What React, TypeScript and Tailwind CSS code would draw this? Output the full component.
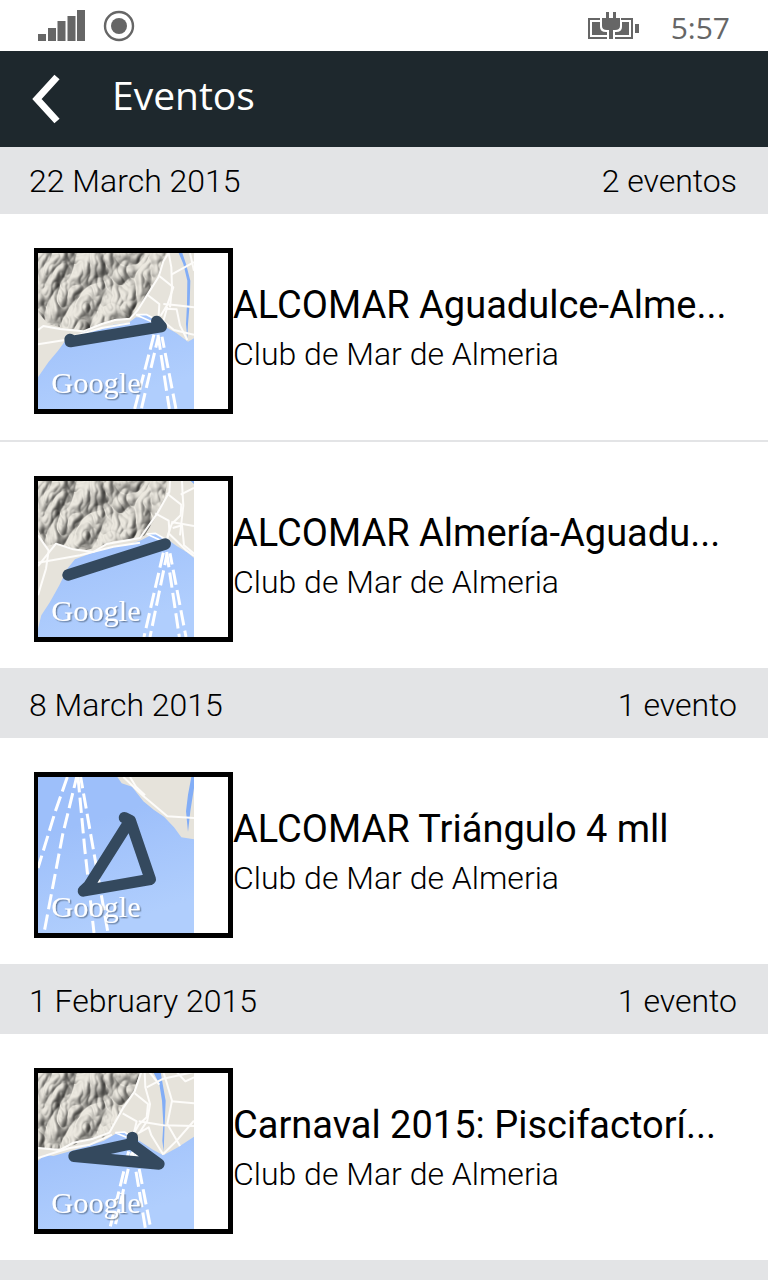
import type { ReactNode } from 'react';

type Point = [number, number];

interface MapArt {
  land: string;
  hills?: string;
  river?: string;
  roads: string[];
  ferries: Point[][];
  route: string;
  harbour?: string;
}

interface EventItem {
  title: string;
  club: string;
  map: string;
}

interface EventGroup {
  date: string;
  count: string;
  events: EventItem[];
}

const groups: EventGroup[] = [
  {
    date: '22 March 2015',
    count: '2 eventos',
    events: [
      { title: 'ALCOMAR Aguadulce-Alme...', club: 'Club de Mar de Almeria', map: 'aguadulce' },
      { title: 'ALCOMAR Almería-Aguadu...', club: 'Club de Mar de Almeria', map: 'almeria' },
    ],
  },
  {
    date: '8 March 2015',
    count: '1 evento',
    events: [{ title: 'ALCOMAR Triángulo 4 mll', club: 'Club de Mar de Almeria', map: 'triangulo' }],
  },
  {
    date: '1 February 2015',
    count: '1 evento',
    events: [{ title: 'Carnaval 2015: Piscifactorí...', club: 'Club de Mar de Almeria', map: 'carnaval' }],
  },
];

// All map shapes are drawn on a 492 x 495 canvas, the viewBox trims the margin
const maps: Record<string, MapArt> = {
  aguadulce: {
    land: 'M24 27H492V283L474 293L440 268L400 245L350 222L318 220L296 236L250 242L215 256L170 262L130 276L105 292L84 320L55 355L24 400Z',
    hills: 'M24 27H408L388 90L352 152L322 200L300 222L250 228L215 240L165 262L100 252L55 240L24 205Z',
    river: 'M446 27H457L468 60L481 110L479 180L474 240L472 284L468 240L471 180L472 110L460 60Z',
    roads: [
      'M24 258L40 246L90 255L160 262L215 240L255 228L300 224L322 200L352 152L386 98L400 52L416 27',
      'M24 301L105 288L135 275L215 252L300 238',
      'M352 152L388 180L386 215',
      'M388 96L430 130L412 182L392 215',
      'M416 27L424 70L426 130L420 190',
      'M400 180L440 184L492 190',
      'M424 92L492 54',
      'M404 194L440 196L450 244L472 288',
      'M412 188L400 232L432 258L492 272',
      'M480 27L492 80',
    ],
    ferries: [
      [[372, 272], [314, 495]],
      [[385, 278], [334, 495]],
      [[384, 272], [418, 495]],
      [[396, 278], [438, 495]],
    ],
    harbour: 'M318 212L350 212L380 228L372 236Z',
    route: 'M120 286L121 293L394 248L380 232',
  },
  almeria: {
    land: 'M24 27H492V258L470 240L440 222L410 200L370 186L330 206L290 220L240 226L200 238L135 262L112 290L88 340L60 390L34 430L24 470Z',
    hills: 'M24 27H412L402 90L372 145L344 190L320 200L250 206L220 220L170 234L120 228L75 215L45 222L24 170Z',
    river: 'M482 27H492V36Z',
    roads: [
      'M24 190L56 236L48 290L24 370',
      'M24 282L78 215L130 232L190 240L230 216L330 198L382 124L418 60L420 27',
      'M24 272L150 250L250 224L330 212',
      'M376 124L416 146L418 176L412 200',
      'M410 64L454 98L452 130L425 156L412 195',
      'M456 27L458 70L460 100L450 190',
      'M424 150L492 162',
      'M428 168L456 160L462 220L492 245',
      'M452 68L492 48',
      'M418 186L470 236L492 252',
    ],
    ferries: [
      [[400, 242], [342, 495]],
      [[411, 246], [360, 495]],
      [[410, 240], [448, 495]],
      [[420, 244], [468, 495]],
    ],
    harbour: 'M350 186L376 184L404 200L390 204Z',
    route: 'M114 309L406 216',
  },
  triangulo: {
    land: 'M262 27H492V214L454 208L432 178L402 146L372 126L340 100L306 56L275 46Z',
    river: 'M484 27H492V60L481 130L474 192L468 130L474 80Z',
    roads: ['M280 27L340 84L412 145L492 150', 'M300 27L318 56L345 82'],
    ferries: [
      [[112, 27], [76, 130], [24, 300]],
      [[140, 27], [98, 200], [42, 495]],
      [[144, 27], [164, 240], [192, 495]],
      [[152, 27], [184, 210], [234, 495]],
    ],
    route: 'M283 149L301 158L361 334L160 369L176 354L297 162',
  },
  carnaval: {
    land: 'M24 24H492V218L444 250L400 274L370 258L330 232L295 215L262 206L222 230L180 244L120 262L70 276L45 272L24 290Z',
    hills: 'M24 24H330L312 82L280 130L240 200L220 222L160 230L120 248L70 256L24 250Z',
    river: 'M370 24H392L398 60L407 110L404 180L401 262L397 230L400 180L396 110L388 60Z',
    roads: [
      'M24 252L90 258L130 236L190 224L238 206L278 134L314 82L334 24',
      'M24 282L80 264L120 252L180 242L246 212',
      'M278 148L320 172L312 206',
      'M314 88L354 120L350 160L326 182L312 208',
      'M344 24L346 70L360 120L352 170L330 204',
      'M326 172L400 184L492 186',
      'M400 24L410 56L426 110L412 180L450 246',
      'M350 70L400 44L492 24',
      'M424 112L492 118',
      'M358 24L388 62',
      'M324 208L356 190L364 214L400 272',
      'M400 270L440 230L492 170',
      'M440 24L466 52L492 40',
    ],
    ferries: [
      [[296, 262], [240, 492]],
      [[306, 266], [254, 492]],
      [[308, 262], [346, 492]],
      [[318, 266], [362, 492]],
    ],
    harbour: 'M256 206L284 204L300 216L290 220Z',
    route: 'M307 220L307 242L387 300L132 277L300 240',
  },
};

const routeAlt: Record<string, string> = {
  aguadulce: 'Route along the coast from Aguadulce to Almería',
  almeria: 'Route along the coast from Almería to Aguadulce',
  triangulo: 'Triangular route in the bay',
  carnaval: 'Route around the fish farm',
};

function MapThumb({ name }: { name: string }) {
  const art = maps[name];
  return (
    <svg viewBox="24 27 468 468" className="block size-[156px]" role="img" aria-label={routeAlt[name]}>
      <defs>
        <linearGradient id={`${name}-sea`} x1="0" y1="0" x2="0.3" y2="1">
          <stop offset="0.35" stopColor="#9dbffa" />
          <stop offset="1" stopColor="#b0cefd" />
        </linearGradient>
        <filter id={`${name}-relief`} x="0" y="0" width="100%" height="100%" colorInterpolationFilters="sRGB">
          <feTurbulence type="turbulence" baseFrequency="0.011 0.008" numOctaves="3" seed="4" result="noise" />
          <feDiffuseLighting in="noise" surfaceScale="26" diffuseConstant="1.12" lightingColor="#dedbd3">
            <feDistantLight azimuth="215" elevation="58" />
          </feDiffuseLighting>
          <feComposite in2="SourceAlpha" operator="in" />
        </filter>
        <filter id={`${name}-shadow`} x="-10%" y="-10%" width="120%" height="130%">
          <feDropShadow dx="4" dy="4" stdDeviation="2" floodColor="#43536b" floodOpacity="0.6" />
        </filter>
      </defs>
      <rect x="24" y="24" width="468" height="471" fill={`url(#${name}-sea)`} />
      <path d={art.land} fill="#e6e3db" />
      {art.hills && (
        <>
          <path d={art.hills} fill="#c9c6be" />
          <path d={art.hills} fill="#c9c6be" filter={`url(#${name}-relief)`} opacity="0.75" />
        </>
      )}
      {art.river && <path d={art.river} fill="#82adf6" />}
      {art.roads.map((d) => (
        <path key={d} d={d} fill="none" stroke="#fdfcfa" strokeWidth="6" strokeLinejoin="round" />
      ))}
      {art.harbour && <path d={art.harbour} fill="#a3c4fb" stroke="#fff" strokeWidth="5" />}
      {art.ferries.map((line, i) => (
        <polyline
          key={i}
          points={line.map((p) => p.join(',')).join(' ')}
          fill="none"
          stroke="#fff"
          strokeWidth="9"
          strokeDasharray="46 16"
          strokeDashoffset={i % 2 ? 12 : 0}
        />
      ))}
      <path d={art.route} fill="none" stroke="#34495e" strokeWidth="34" strokeLinecap="round" strokeLinejoin="round" />
      <text
        x="64"
        y="446"
        fontFamily="'Liberation Serif', serif"
        fontSize="91"
        fill="#fff"
        filter={`url(#${name}-shadow)`}
      >
        Google
      </text>
    </svg>
  );
}

function SignalIcon() {
  return (
    <svg viewBox="0 0 48 31" className="h-[31px] w-12" fill="#666" aria-hidden="true">
      <rect x="0" y="24" width="8" height="7" />
      <rect x="10" y="18" width="8" height="13" />
      <rect x="19.5" y="11" width="8" height="20" />
      <rect x="29.5" y="6" width="8" height="25" />
      <rect x="39" y="0" width="8" height="31" />
    </svg>
  );
}

function RecordIcon() {
  return (
    <svg viewBox="0 0 32 32" className="size-8" aria-hidden="true">
      <circle cx="16" cy="16" r="14" fill="none" stroke="#666" strokeWidth="2.4" />
      <circle cx="16" cy="16" r="8" fill="#666" />
    </svg>
  );
}

function BatteryIcon() {
  return (
    <svg viewBox="0 0 51 28" className="h-7 w-[51px]" aria-hidden="true">
      <path d="M12 7H1V26H19M33 7H44V26H27" fill="none" stroke="#666" strokeWidth="2" />
      <path d="M4 10H12V15Q12 20 18 20H19V23H4ZM41 10H34V15Q34 20 28 20H27V23H41Z" fill="#666" />
      <path d="M18 0H21V6H25V0H28V6H32V14Q32 18 27 18H25V27H21V18H19Q14 18 14 14V6H18Z" fill="#666" />
      <rect x="47" y="12" width="4" height="9" fill="#666" />
    </svg>
  );
}

function StatusBar() {
  return (
    <div className="flex h-[51px] items-center bg-white pr-[38px] text-[#666] pl-[38px]">
      <SignalIcon />
      <span className="ml-[17px]">
        <RecordIcon />
      </span>
      <span className="ml-auto">
        <BatteryIcon />
      </span>
      <span className="ml-8 pt-1 font-['Open_Sans',sans-serif] text-[30px] leading-10">5:57</span>
    </div>
  );
}

function AppHeader({ children }: { children: ReactNode }) {
  return (
    <header className="flex h-24 items-center bg-[#1e282d] pl-7 text-white">
      <button type="button" aria-label="Atrás" className="flex h-16 w-[84px] items-center">
        <svg viewBox="0 0 36 52" className="h-[52px] w-9" aria-hidden="true">
          <path d="M29 4L9 26L29 48" fill="none" stroke="#fff" strokeWidth="7" />
        </svg>
      </button>
      <h1 className="pb-2 font-['Open_Sans',sans-serif] text-[39px] leading-[56px]">{children}</h1>
    </header>
  );
}

function EventRow({ event }: { event: EventItem }) {
  return (
    <li className="border-b-2 border-[#e3e4e6] bg-white">
      <a href="#evento" className="flex pt-[34px] pr-7 pb-[26px] pl-[34px]">
        <div className="h-[166px] w-[199px] shrink-0 border-[5px] border-l-4 border-black bg-white">
          <MapThumb name={event.map} />
        </div>
        <div className="min-w-0 flex-1 pt-[31px]">
          <h3 className="truncate text-[38px] leading-[52px]">{event.title}</h3>
          <p className="truncate text-[32px] leading-[46px] font-light">{event.club}</p>
        </div>
      </a>
    </li>
  );
}

export default function App() {
  return (
    <div className="flex min-h-screen flex-col bg-[#e3e4e6] font-[Roboto,sans-serif] text-black">
      <StatusBar />
      <AppHeader>Eventos</AppHeader>
      <main className="divide-y divide-[#e3e4e6]">
        {groups.map((group) => (
          <section key={group.date}>
            <div className="flex h-[67px] items-center justify-between pr-[31px] pl-[29px] text-[32px] leading-10 font-light">
              <h2>{group.date}</h2>
              <span>{group.count}</span>
            </div>
            <ul>
              {group.events.map((event) => (
                <EventRow key={event.title} event={event} />
              ))}
            </ul>
          </section>
        ))}
      </main>
    </div>
  );
}
